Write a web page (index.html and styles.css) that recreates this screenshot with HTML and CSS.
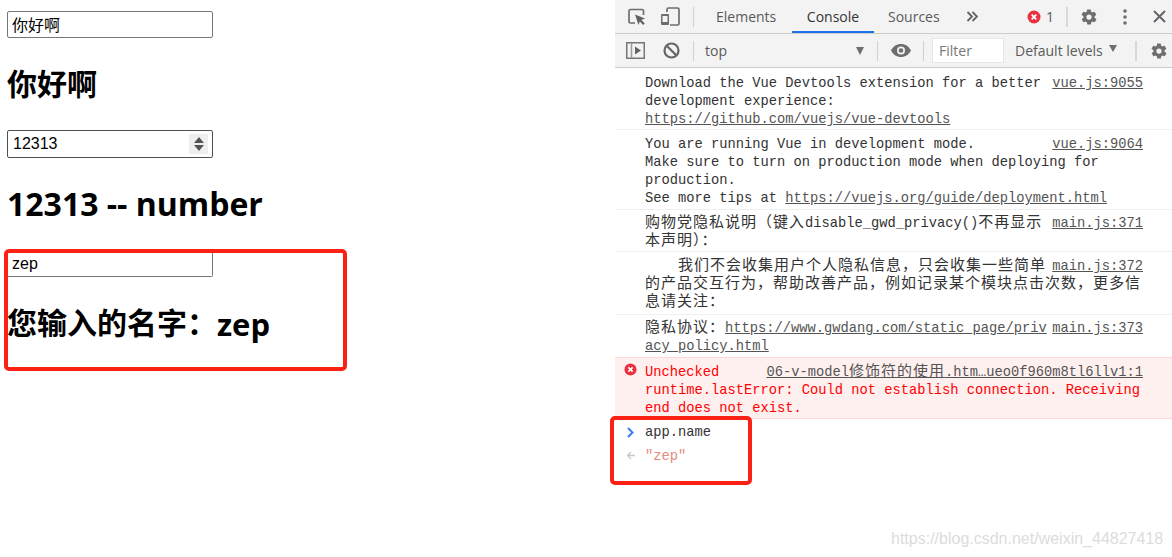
FILE: index.html
```html
<!DOCTYPE html>
<html lang="zh-CN">
<head>
<meta charset="utf-8">
<title>v-model</title>
<link rel="stylesheet" href="styles.css">
</head>
<body>
<main class="page">
  <input class="field field-a" type="text" value="你好啊" readonly>
  <h1 class="title title-a"><span class="hz">你好啊</span></h1>
  <div class="field field-num"><span>12313</span>
    <span class="spin"><svg width="12" height="16" viewBox="0 0 12 16"><path d="M6 1 11 7H1z M6 15 1 9H11z" fill="#555"/></svg></span>
  </div>
  <h1 class="title title-b">12313 -- number</h1>
  <input class="field field-c" type="text" value="zep" readonly>
  <h1 class="title title-c"><span class="hz">您输入的名字：</span>zep</h1>
</main>

<aside class="devtools">
  <div class="tabbar">
    <svg class="ic ic-inspect" width="18" height="18" viewBox="0 0 18 18"><path d="M7 15H2.5A1.5 1.5 0 0 1 1 13.500V3A1.500 1.500 0 0 1 2.500 1.500H14A1.500 1.500 0 0 1 15.500 3V7" fill="none" stroke="#6e6e6e" stroke-width="1.700"/><path d="M7 6.500 17 10.500 13.400 12 16.800 15.400 15.200 17 11.800 13.600 10.500 17z" fill="#5f6368"/></svg>
    <svg class="ic ic-device" width="20" height="19" viewBox="0 0 20 19"><path d="M7 5V2.500A1.500 1.500 0 0 1 8.500 1H17.500A1.500 1.500 0 0 1 19 2.500V16.500A1.500 1.500 0 0 1 17.500 18H10" fill="none" stroke="#6e6e6e" stroke-width="1.700"/><path d="M2 7H8A1 1 0 0 1 9 8V17A1 1 0 0 1 8 18H2A1 1 0 0 1 1 17V8A1 1 0 0 1 2 7Z M2.500 9V15H7.500V9Z" fill="#6e6e6e" fill-rule="evenodd"/></svg>
    <i class="sep sep-tabs"></i>
    <span class="tab tab-elements">Elements</span>
    <span class="tab tab-console">Console</span>
    <span class="tab tab-sources">Sources</span>
    <svg class="ic ic-more" width="12" height="11" viewBox="0 0 12 11"><path d="M1.500 1 6 5.500 1.500 10M6.500 1 11 5.500 6.500 10" fill="none" stroke="#5f6368" stroke-width="1.800"/></svg>
    <svg class="ic ic-err" width="14" height="14" viewBox="0 0 14 14"><circle cx="7" cy="7" r="6.500" fill="#e8303f"/><path d="M4.700 4.700 9.300 9.300M9.300 4.700 4.700 9.300" stroke="#fff" stroke-width="1.800"/></svg>
    <span class="err-count">1</span>
    <i class="sep sep-err"></i>
    <svg class="ic ic-gear" width="18" height="18" viewBox="0 0 24 24"><path fill-rule="evenodd" fill="#6e6e6e" d="M19.400 13c.1-.3.100-.7.100-1s0-.7-.1-1l2.100-1.600c.2-.2.200-.4.100-.6l-2-3.500c-.1-.2-.4-.3-.6-.2l-2.500 1c-.5-.4-1.100-.7-1.700-1l-.4-2.600c0-.3-.2-.5-.5-.5h-4c-.3 0-.5.200-.5.500l-.4 2.600c-.6.300-1.200.6-1.700 1l-2.500-1c-.2-.1-.5 0-.6.200l-2 3.500c-.1.200-.1.400.1.600L4.600 11c-.1.300-.1.700-.1 1s0 .7.100 1l-2.100 1.600c-.2.200-.2.400-.1.600l2 3.500c.1.200.4.300.6.200l2.500-1c.5.400 1.100.7 1.700 1l.4 2.600c0 .3.200.5.500.5h4c.3 0 .5-.2.500-.5l.4-2.600c.6-.3 1.200-.6 1.700-1l2.500 1c.2.100.5 0 .6-.2l2-3.500c.1-.2.100-.4-.1-.6ZM12 15.500a3.500 3.500 0 1 1 0-7 3.500 3.500 0 0 1 0 7Z"/></svg>
    <svg class="ic ic-dots" width="4" height="16" viewBox="0 0 4 16"><circle cx="2" cy="2" r="1.800" fill="#6e6e6e"/><circle cx="2" cy="8" r="1.800" fill="#6e6e6e"/><circle cx="2" cy="14" r="1.800" fill="#6e6e6e"/></svg>
    <svg class="ic ic-close" width="13" height="13" viewBox="0 0 13 13"><path d="M1 1 12 12M12 1 1 12" stroke="#5f6368" stroke-width="1.900"/></svg>
  </div>

  <div class="toolbar">
    <svg class="ic ic-side" width="19" height="17" viewBox="0 0 19 17"><rect x=".75" y=".75" width="17.500" height="15.500" fill="none" stroke="#777" stroke-width="1.500"/><path d="M5.500 1V16" stroke="#999" stroke-width="1.500"/><path d="M9 4.500 15 8.500 9 12.500z" fill="#5f6368"/></svg>
    <svg class="ic ic-block" width="17" height="17" viewBox="0 0 17 17"><circle cx="8.500" cy="8.500" r="7" fill="none" stroke="#666" stroke-width="2.200"/><path d="M3.500 3.500 13.500 13.500" stroke="#666" stroke-width="2.200"/></svg>
    <i class="sep sep-ctx"></i>
    <span class="ctx">top</span>
    <i class="tri tri-ctx"></i>
    <i class="sep sep-sel"></i>
    <svg class="ic ic-eye" width="20" height="13" viewBox="0 0 20 13"><path fill-rule="evenodd" fill="#6e6e6e" d="M10 0C5.500 0 1.800 2.700 0 6.500 1.800 10.300 5.500 13 10 13s8.200-2.700 10-6.500C18.200 2.700 14.500 0 10 0Zm0 10.500a4 4 0 1 1 0-8 4 4 0 0 1 0 8Zm0-6.300a2.300 2.300 0 1 0 0 4.600 2.300 2.300 0 0 0 0-4.600Z"/></svg>
    <i class="sep sep-eye"></i>
    <span class="filter">Filter</span>
    <span class="levels">Default levels</span>
    <i class="tri tri-lvl"></i>
    <i class="sep sep-lvl"></i>
    <svg class="ic ic-gear2" width="18" height="18" viewBox="0 0 24 24"><path fill-rule="evenodd" fill="#6e6e6e" d="M19.400 13c.1-.3.100-.7.100-1s0-.7-.1-1l2.100-1.600c.2-.2.200-.4.100-.6l-2-3.500c-.1-.2-.4-.3-.6-.2l-2.500 1c-.5-.4-1.100-.7-1.700-1l-.4-2.600c0-.3-.2-.5-.5-.5h-4c-.3 0-.5.200-.5.500l-.4 2.600c-.6.300-1.200.6-1.700 1l-2.500-1c-.2-.1-.5 0-.6.200l-2 3.500c-.1.200-.1.400.1.600L4.600 11c-.1.300-.1.700-.1 1s0 .7.100 1l-2.100 1.600c-.2.200-.2.400-.1.600l2 3.500c.1.200.4.300.6.200l2.500-1c.5.400 1.100.7 1.700 1l.4 2.600c0 .3.200.5.500.5h4c.3 0 .5-.2.500-.5l.4-2.600c.6-.3 1.200-.6 1.700-1l2.500 1c.2.100.5 0 .6-.2l2-3.500c.1-.2.100-.4-.1-.6ZM12 15.500a3.500 3.500 0 1 1 0-7 3.500 3.500 0 0 1 0 7Z"/></svg>
  </div>

  <div class="console">
    <div class="row row-1">
      <div class="msg">Download the Vue Devtools extension for a better<br>development experience:<br><u class="ln">https://github.com/vuejs/vue-devtools</u></div>
      <u class="src">vue.js:9055</u>
    </div>
    <div class="row row-2">
      <div class="msg">You are running Vue in development mode.<br>Make sure to turn on production mode when deploying for<br>production.<br>See more tips at <u class="ln">https://vuejs.org/guide/deployment.html</u></div>
      <u class="src">vue.js:9064</u>
    </div>
    <div class="row row-3">
      <div class="msg"><span class="zh">购物党隐私说明（键入</span>disable_gwd_privacy()<span class="zh">不再显示</span><br><span class="zh">本声明）：</span></div>
      <u class="src">main.js:371</u>
    </div>
    <div class="row row-4">
      <div class="msg"><span class="zh indent">我们不会收集用户个人隐私信息，只会收集一些简单</span><br><span class="zh">的产品交互行为，帮助改善产品，例如记录某个模块点击次数，更多信</span><br><span class="zh">息请关注：</span></div>
      <u class="src">main.js:372</u>
    </div>
    <div class="row row-5">
      <div class="msg"><span class="zh">隐私协议：</span><u class="ln">https://www.gwdang.com/static_page/priv</u><br><u class="ln">acy_policy.html</u></div>
      <u class="src">main.js:373</u>
    </div>
    <div class="row row-err">
      <svg class="ic-msgerr" width="13" height="13" viewBox="0 0 14 14"><circle cx="7" cy="7" r="6.500" fill="#e8303f"/><path d="M4.700 4.700 9.300 9.300M9.300 4.700 4.700 9.300" stroke="#fff" stroke-width="1.800"/></svg>
      <div class="msg msg-err">Unchecked<br>runtime.lastError: Could not establish connection. Receiving<br>end does not exist.</div>
      <u class="src src-err">06-v-model<span class="zh">修饰符的使用</span>.htm…ueo0f960m8tl6llv1:1</u>
    </div>
    <div class="row-cmd">
      <svg class="prompt" width="9" height="11" viewBox="0 0 9 11"><path d="M2 1 6.500 5.500 2 10" fill="none" stroke="#367cf1" stroke-width="2"/></svg>
      <span>app.name</span>
    </div>
    <div class="row-res">
      <svg class="prompt" width="10" height="9" viewBox="0 0 10 9"><path d="M5 1 1.500 4.500 5 8M1.500 4.500H9" fill="none" stroke="#c8c8c8" stroke-width="1.300"/></svg>
      <span class="str">"zep"</span>
    </div>
  </div>
</aside>

<div class="mark mark-left"></div>
<div class="mark mark-right"></div>
<div class="watermark">https://blog.csdn.net/weixin_44827418</div>
</body>
</html>
```

FILE: styles.css
```css
* { box-sizing: border-box; }
html, body { margin: 0; height: 100%; }
body {
  display: flex;
  width: 1172px;
  height: 557px;
  overflow: hidden;
  background: #fff;
  color: #000;
  font-family: "Noto Sans CJK SC", "Noto Sans", sans-serif;
}

/* left page */
.page { width: 615px; padding: 11px 0 0 7px; }
.field {
  display: block;
  width: 206px;
  height: 27px;
  padding: 0 4px;
  border: 1px solid #767676;
  border-radius: 2px;
  background: #fff;
  color: #000;
  font: 16px/25px "Liberation Sans", "Noto Sans CJK SC", sans-serif;
  outline: none;
}
.field-a { padding-bottom: 2px; }
.field-num {
  display: flex;
  align-items: center;
  justify-content: space-between;
  height: 28px;
  margin-top: 25px;
  padding: 0 4px 2px 5px;
  border-color: #505050;
}
.spin {
  display: flex;
  align-items: center;
  justify-content: center;
  width: 19px;
  height: 20px;
  margin-bottom: -2px;
  background: #efefef;
}
.field-c { margin-top: 26px; border-top-color: transparent; }
.title {
  margin: 0;
  font-family: "Open Sans", "Noto Sans CJK SC", sans-serif;
  font-size: 32px;
  line-height: 40px;
  font-weight: 700;
}
.hz {
  font-family: "Noto Sans CJK SC", sans-serif;
  font-size: 30px;
  line-height: 0;
  position: relative;
  top: -2px;
}
.title-a { margin-top: 27px; }
.title-b { margin-top: 26px; }
.title-c { margin-top: 27px; font-size: 31px; }

/* devtools shell */
.devtools {
  width: 557px;
  height: 557px;
  font-family: "Open Sans", "Noto Sans", sans-serif;
  color: #5a5a5a;
}
.tabbar, .toolbar {
  display: flex;
  align-items: center;
  background: #f3f3f3;
  border-bottom: 1px solid #cdcdcd;
}
.tabbar { height: 34px; }
.toolbar { height: 34px; }
.ic { flex: none; display: block; }
.sep { flex: none; display: block; width: 1px; height: 20px; background: #d0d0d0; }

.ic-inspect { margin-left: 13px; }
.ic-device { margin-left: 14px; }
.sep-tabs { margin-left: 13px; }
.tab { font-size: 14px; line-height: 33px; height: 33px; flex: none; }
.tab-elements { margin-left: 22px; width: 60px; }
.tab-console {
  margin-left: 16px;
  width: 82px;
  text-align: center;
  color: #333;
  border-bottom: 2px solid #1a73e8;
}
.tab-sources { margin-left: 14px; width: 58px; }
.ic-more { margin-left: 20px; }
.ic-err { margin-left: 49px; }
.err-count { margin-left: 5px; font-size: 14px; width: 8px; }
.sep-err { margin-left: 12px; width: 2px; background: #d8d8d8; }
.ic-gear { margin-left: 12px; }
.ic-dots { margin-left: 25px; }
.ic-close { margin-left: 26px; }

.ic-side { margin-left: 11px; }
.ic-block { margin-left: 18px; }
.sep-ctx { margin-left: 13px; }
.ctx { margin-left: 11px; width: 151px; font-size: 14px; }
.tri {
  flex: none;
  display: block;
  width: 0;
  height: 0;
  border-left: 4.500px solid transparent;
  border-right: 4.500px solid transparent;
  border-top: 8px solid #6e6e6e;
}
.sep-sel { margin-left: 13px; }
.ic-eye { margin-left: 13px; }
.sep-eye { margin-left: 12px; }
.filter {
  flex: none;
  margin-left: 8px;
  width: 72px;
  height: 25px;
  padding-left: 6px;
  background: #fff;
  border: 1px solid #e6e6e6;
  font-size: 14px;
  line-height: 24px;
  color: #777;
}
.levels { flex: none; margin-left: 11px; width: 94px; font-size: 14px; }
.tri-lvl { margin-left: 0; border-top-width: 7px; margin-top: -4px; }
.sep-lvl { margin-left: 18px; width: 2px; background: #d8d8d8; }
.ic-gear2 { margin-left: 13px; }

/* console */
.console {
  font: 13.750px/18px "Liberation Mono", "Noto Sans CJK SC", monospace;
  color: #333;
}
.zh {
  font-family: "Noto Sans CJK SC", sans-serif;
  font-size: 15px;
  line-height: 0;
  letter-spacing: 1px;
  font-weight: 400;
}
.indent { margin-left: 33px; }
.row {
  position: relative;
  display: flex;
  justify-content: space-between;
  padding-left: 30px;
  padding-right: 29px;
  border-bottom: 1px solid #efefef;
}
.msg { flex: 1 1 0; width: 0; white-space: nowrap; }
.src { flex: none; color: #545454; white-space: nowrap; }
.ln { color: #545454; }
.row-1 { padding-top: 7px; padding-bottom: 0; }
.row-2 { padding-top: 6px; padding-bottom: 1px; }
.row-3 { padding-top: 5px; padding-bottom: 0; }
.row-4 { padding-top: 6px; padding-bottom: 2px; }
.row-5 { padding-top: 5px; padding-bottom: 1px; border-bottom-color: #ffd6d6; }
.row-err {
  padding-top: 6px;
  padding-bottom: 0;
  background: #fff0f0;
  border-bottom-color: #ffd6d6;
  color: #f00;
}
.msg-err { color: #f00; }
.ic-msgerr { position: absolute; left: 9px; top: 5px; }
.src-err { position: absolute; right: 29px; top: 6px; }
.row-cmd, .row-res { display: flex; align-items: center; padding-left: 30px; position: relative; height: 24px; }
.row-cmd { margin-top: 2px; color: #333; }
.prompt { position: absolute; left: 11px; top: 6px; }
.str { color: #e58a80; }

/* annotations over the screenshot */
.mark {
  position: absolute;
  border: 4px solid #fb2115;
  border-radius: 5px;
}
.mark-left { left: 4px; top: 249px; width: 343px; height: 122px; }
.mark-right { left: 610px; top: 416px; width: 142px; height: 69px; }
.watermark {
  position: absolute;
  left: 891px;
  top: 530px;
  font: 16px/18px "Liberation Sans", sans-serif;
  color: #dcdcdc;
}
```
